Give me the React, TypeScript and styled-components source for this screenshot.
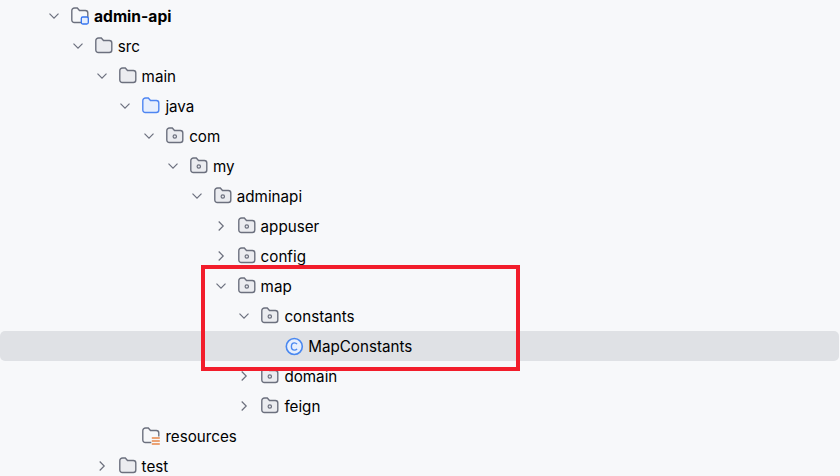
import React from "react";
import styled, { createGlobalStyle } from "styled-components";

const GlobalStyle = createGlobalStyle`
  html, body {
    margin: 0;
    padding: 0;
    background: #f7f8fa;
    overflow: hidden;
  }
`;

type IconKind = "module" | "plain" | "source" | "package" | "resources" | "class";

type Node = {
  label: string;
  level: number;
  icon: IconKind;
  open?: boolean;
  leaf?: boolean;
  bold?: boolean;
  selected?: boolean;
};

const nodes: Node[] = [
  { label: "admin-api", level: 0, icon: "module", open: true, bold: true },
  { label: "src", level: 1, icon: "plain", open: true },
  { label: "main", level: 2, icon: "plain", open: true },
  { label: "java", level: 3, icon: "source", open: true },
  { label: "com", level: 4, icon: "package", open: true },
  { label: "my", level: 5, icon: "package", open: true },
  { label: "adminapi", level: 6, icon: "package", open: true },
  { label: "appuser", level: 7, icon: "package" },
  { label: "config", level: 7, icon: "package" },
  { label: "map", level: 7, icon: "package", open: true },
  { label: "constants", level: 8, icon: "package", open: true },
  { label: "MapConstants", level: 9, icon: "class", leaf: true, selected: true },
  { label: "domain", level: 8, icon: "package" },
  { label: "feign", level: 8, icon: "package" },
  { label: "resources", level: 3, icon: "resources", leaf: true },
  { label: "test", level: 2, icon: "plain" },
];

const FOLDER = "M1.5 4.2C1.5 2.7 2.7 1.5 4.2 1.5H7L9.2 4H15C16.4 4 17.5 5.1 17.5 6.5V13.5C17.5 14.9 16.4 16 15 16H4C2.6 16 1.5 14.9 1.5 13.5V4.2Z";

const Chevron = ({ open }: { open?: boolean }) => (
  <svg width="12" height="12" viewBox="0 0 12 12" fill="none" stroke="#6c707e" strokeWidth="1.2">
    <path d={open ? "M1.5 3.7L6 8.2L10.5 3.7" : "M3.7 1.5L8.2 6L3.7 10.5"} />
  </svg>
);

const TreeIcon = ({ kind }: { kind: IconKind }) => {
  if (kind === "class") {
    return (
      <svg width="19" height="19" viewBox="0 0 19 19" fill="none">
        <circle cx="9.3" cy="9.5" r="8" fill="#e7effd" stroke="#4a88f0" strokeWidth="1.6" />
        <path d="M12 7.2C11.4 6.4 10.5 5.9 9.5 5.9C7.7 5.9 6.4 7.4 6.4 9.5C6.4 11.6 7.7 13.1 9.5 13.1C10.5 13.1 11.4 12.6 12 11.8" stroke="#4a88f0" strokeWidth="1.4" />
      </svg>
    );
  }
  const blue = kind === "source";
  return (
    <svg width="19" height="19" viewBox="0.7 0.5 19 19" fill="none">
      <path
        d={FOLDER}
        fill={blue ? "#e7effd" : kind === "module" || kind === "resources" ? "#f7f8fa" : "#ebecf0"}
        stroke={blue ? "#4f86f2" : "#6c707e"}
        strokeWidth="1.4"
      />
      {kind === "package" && <circle cx="9.5" cy="10" r="1.7" fill="none" stroke="#6c707e" strokeWidth="1.2" />}
      {kind === "module" && <rect x="11" y="10.5" width="7" height="7" rx="1.5" fill="#e7effd" stroke="#3574f0" strokeWidth="1.3" />}
      {kind === "resources" && (
        <g>
          <rect x="10" y="10" width="9.7" height="9.5" fill="#f7f8fa" />
          <path d="M10.5 11.5H18.5M10.5 14.5H18.5M10.5 17.5H18.5" stroke="#e8874a" strokeWidth="1.6" />
        </g>
      )}
    </svg>
  );
};

export default function App() {
  return (
    <Page>
      <GlobalStyle />
      <Tree>
        {nodes.map((node) => (
          <Row key={node.label} $selected={node.selected}>
            <Indent $level={node.level} />
            <Arrow>{!node.leaf && <Chevron open={node.open} />}</Arrow>
            <IconSlot>
              <TreeIcon kind={node.icon} />
            </IconSlot>
            <Label $bold={node.bold}>{node.label}</Label>
          </Row>
        ))}
      </Tree>
      <Highlight />
    </Page>
  );
}

const Page = styled.div`
  position: relative;
  width: 840px;
  height: 476px;
  overflow: hidden;
  background: #f7f8fa;
  font-family: Inter, "Noto Sans", sans-serif;
`;

const Tree = styled.div`
  display: flex;
  flex-direction: column;
  padding-top: 1px;
`;

const Row = styled.div<{ $selected?: boolean }>`
  display: flex;
  align-items: center;
  flex: none;
  width: 839px;
  height: 30px;
  padding-left: 48px;
  box-sizing: border-box;
  border-radius: 5px;
  background: ${(props) => (props.$selected ? "#dfe1e5" : "transparent")};
`;

const Indent = styled.span<{ $level: number }>`
  flex: none;
  width: ${(props) => props.$level * 23.8}px;
`;

const Arrow = styled.span`
  display: flex;
  flex: none;
  width: 23px;
`;

const IconSlot = styled.span`
  display: flex;
  flex: none;
  width: 23px;
`;

const Label = styled.span<{ $bold?: boolean }>`
  color: #000;
  font-size: ${(props) => (props.$bold ? "15.6px" : "15.2px")};
  font-weight: ${(props) => (props.$bold ? 700 : 400)};
  white-space: nowrap;
`;

const Highlight = styled.div`
  position: absolute;
  left: 201px;
  top: 265px;
  width: 319px;
  height: 106px;
  box-sizing: border-box;
  border: 4px solid #f21d2b;
`;
